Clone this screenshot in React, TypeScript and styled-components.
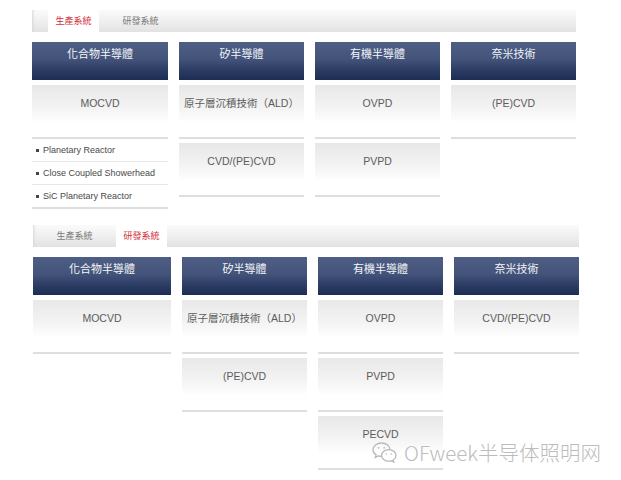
import styled, { createGlobalStyle } from 'styled-components';

const GlobalStyle = createGlobalStyle`
  body {
    margin: 0;
    background: #fff;
    font-family: "Liberation Sans", "Noto Sans CJK TC", sans-serif;
  }
`;

const Page = styled.div`
  position: relative;
  width: 621px;
  height: 480px;
  padding-top: 10px;
  box-sizing: border-box;
  overflow: hidden;
`;

const Section = styled.section<{ $left: number; $top: number; $width: number }>`
  margin-left: ${(p) => p.$left}px;
  margin-top: ${(p) => p.$top}px;
  width: ${(p) => p.$width}px;
`;

const TabBar = styled.div`
  display: flex;
  gap: 16px;
  height: 22px;
  padding-left: 16px;
  margin-bottom: 10px;
  background: linear-gradient(to bottom, #fbfbfb 0%, #eeeeee 55%, #e2e2e2 100%);
  box-shadow: inset 3px 0 3px -2px #d6d6d6;
`;

const Tab = styled.div<{ $active?: boolean }>`
  width: 51px;
  height: 22px;
  line-height: 22px;
  text-align: center;
  font-size: 9px;
  color: ${(p) => (p.$active ? '#d2303c' : '#7a7a7a')};
  background: ${(p) => (p.$active ? '#ffffff' : 'transparent')};
`;

const Columns = styled.div<{ $first: number }>`
  display: grid;
  grid-template-columns: ${(p) => p.$first}px 125px 125px 125px;
  column-gap: 11px;
  align-items: start;
`;

const Column = styled.div`
  display: flex;
  flex-direction: column;
`;

const Header = styled.div`
  height: 38px;
  box-sizing: border-box;
  padding-top: 6px;
  margin-bottom: 5px;
  text-align: center;
  font-size: 11px;
  line-height: 13px;
  color: #f4f6fa;
  background: linear-gradient(to bottom, #4e5e85 0%, #43537a 45%, #2f3f67 70%, #1c2c52 100%);
`;

const Item = styled.div`
  height: 41px;
  padding-top: 11px;
  margin-bottom: 4px;
  text-align: center;
  font-size: 10.5px;
  line-height: 14px;
  color: #5c5c5c;
  border-bottom: 2px solid #dedede;
  background: linear-gradient(to bottom, #e8e8e8 0px, #f3f3f3 22px, #fcfcfc 34px, #fff 38px);
`;

const SubList = styled.ul`
  list-style: none;
  margin: -4px 0 0;
  padding: 0;
`;

const SubItem = styled.li`
  display: flex;
  align-items: center;
  gap: 4px;
  height: 22px;
  padding-left: 4px;
  font-size: 9px;
  color: #4a4a4a;
  border-bottom: 1px solid #e6e6e6;

  &::before {
    content: '';
    width: 3px;
    height: 3px;
    background: #444;
  }

  &:last-child {
    border-bottom: 2px solid #dedede;
  }
`;

const Watermark = styled.div`
  position: absolute;
  left: 372px;
  top: 437px;
  display: flex;
  align-items: center;
  gap: 7px;
  font-family: "Noto Sans CJK SC", "Liberation Sans", sans-serif;
  font-weight: 300;
  font-size: 20.5px;
  color: #bcbcbc;
  text-shadow: 0 0 2px #fff, 0 0 2px #fff;
  white-space: nowrap;
`;

const WeChatIcon = () => (
  <svg width="25" height="22" viewBox="0 0 25 22" fill="none" stroke="#b8b8b8" strokeWidth="1.3">
    <path d="M9.5 2C4.8 2 1 5 1 8.7c0 2.1 1.2 4 3.1 5.2L3.4 16.4l2.9-1.5c1 .3 2.1.5 3.2.5" />
    <path d="M9.5 2c4.5 0 8.2 2.7 8.5 6.2" />
    <circle cx="6.6" cy="6.8" r="0.9" fill="#b8b8b8" stroke="none" />
    <circle cx="12.2" cy="6.8" r="0.9" fill="#b8b8b8" stroke="none" />
    <path d="M16.8 8.6c-4 0-7.2 2.6-7.2 5.8s3.2 5.8 7.2 5.8c.9 0 1.8-.1 2.6-.4l2.4 1.3-.6-2.1c1.7-1.1 2.8-2.8 2.8-4.6 0-3.2-3.2-5.8-7.2-5.8z" />
    <circle cx="14.3" cy="13" r="0.8" fill="#b8b8b8" stroke="none" />
    <circle cx="19.2" cy="13" r="0.8" fill="#b8b8b8" stroke="none" />
  </svg>
);

type Col = { title: string; items: string[]; sub?: string[] };

const production: Col[] = [
  { title: '化合物半導體', items: ['MOCVD'], sub: ['Planetary Reactor', 'Close Coupled Showerhead', 'SiC Planetary Reactor'] },
  { title: '矽半導體', items: ['原子層沉積技術（ALD）', 'CVD/(PE)CVD'] },
  { title: '有機半導體', items: ['OVPD', 'PVPD'] },
  { title: '奈米技術', items: ['(PE)CVD'] },
];

const research: Col[] = [
  { title: '化合物半導體', items: ['MOCVD'] },
  { title: '矽半導體', items: ['原子層沉積技術（ALD）', '(PE)CVD'] },
  { title: '有機半導體', items: ['OVPD', 'PVPD', 'PECVD'] },
  { title: '奈米技術', items: ['CVD/(PE)CVD'] },
];

const Block = ({ cols, active, left, top, width, first }: { cols: Col[]; active: number; left: number; top: number; width: number; first: number }) => (
  <Section $left={left} $top={top} $width={width}>
    <TabBar>
      <Tab $active={active === 0}>生產系統</Tab>
      <Tab $active={active === 1}>研發系統</Tab>
    </TabBar>
    <Columns $first={first}>
      {cols.map((c) => (
        <Column key={c.title}>
          <Header>{c.title}</Header>
          {c.items.map((it) => (
            <Item key={it}>{it}</Item>
          ))}
          {c.sub && (
            <SubList>
              {c.sub.map((s) => (
                <SubItem key={s}>{s}</SubItem>
              ))}
            </SubList>
          )}
        </Column>
      ))}
    </Columns>
  </Section>
);

const App = () => {
  return (
    <Page>
      <GlobalStyle />
      <Block cols={production} active={0} left={32} top={0} width={544} first={136} />
      <Block cols={research} active={1} left={33} top={16} width={546} first={138} />
      <Watermark>
        <WeChatIcon />
        <span>OFweek半导体照明网</span>
      </Watermark>
    </Page>
  );
};

export default App;
